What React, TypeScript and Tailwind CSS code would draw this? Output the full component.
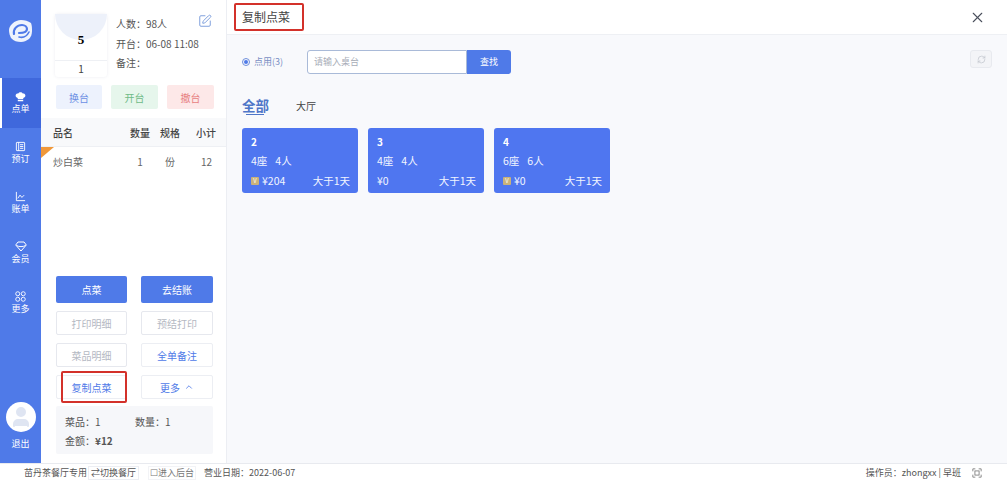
import { X, SquarePen, RefreshCw, ChevronUp, User } from 'lucide-react'

const font = { fontFamily: '"Noto Sans CJK SC", "Noto Sans", sans-serif' }

const tables = [
  { name: '2', seats: '4座', people: '4人', price: '¥204', vip: true },
  { name: '3', seats: '4座', people: '4人', price: '¥0', vip: false },
  { name: '4', seats: '6座', people: '6人', price: '¥0', vip: true },
]

function Logo() {
  return (
    <svg width="24" height="24" viewBox="0 0 24 24">
      <path d="M3 5C6 2 9 1 12 1c4 0 7 1 10 3 1 3 1 5 1 8s-1 6-3 8c-3 2-5 3-8 3-4 0-7-1-10-4-1-2-2-5-2-8 0-2 1-4 3-6z" fill="#eef3fd" />
      <path d="M5 15c-1-5 3-9 8-9 3 0 5 2 5 4 0 3-4 4-8 4" fill="none" stroke="#4f7ae8" strokeWidth="2.2" strokeLinecap="round" />
      <path d="M10 18c4 1 8-1 10-5" fill="none" stroke="#4f7ae8" strokeWidth="1.6" strokeLinecap="round" />
    </svg>
  )
}

function HatIcon() {
  return (
    <svg width="11" height="11" viewBox="0 0 12 12" fill="currentColor">
      <path d="M3 7.500C1.500 7 .5 6 .7 4.500 1 3 2.400 2.500 3.500 2.800 4 1.800 5 1.300 6 1.300s2 .5 2.500 1.500C9.600 2.500 11 3 11.300 4.500 11.500 6 10.500 7 9 7.500V9H3z" />
      <rect x="3" y="9.700" width="6" height="1.500" rx=".4" />
    </svg>
  )
}

function BookIcon() {
  return (
    <svg width="11" height="11" viewBox="0 0 12 12" fill="none" stroke="currentColor" strokeWidth="1">
      <rect x="1.500" y="1.500" width="9" height="9" rx=".6" />
      <path d="M4 1.500v9M5.500 4h3.500M5.500 6h3.500M5.500 8h3.500" />
    </svg>
  )
}

function ChartIcon() {
  return (
    <svg width="11" height="11" viewBox="0 0 12 12" fill="none" stroke="currentColor" strokeWidth="1">
      <path d="M1.500 1v9.500H11" />
      <path d="M3 8l2.500-3.500L7.500 7 10 4.500" />
    </svg>
  )
}

function GemIcon() {
  return (
    <svg width="12" height="11" viewBox="0 0 12 11" fill="none" stroke="currentColor" strokeWidth="1">
      <path d="M3 1h6l2.300 3L6 10 .7 4z" />
      <path d="M1.500 4.500c2.500 1.500 6.500 1.500 9 0" />
    </svg>
  )
}

function GridIcon() {
  return (
    <svg width="11" height="11" viewBox="0 0 12 12" fill="none" stroke="currentColor" strokeWidth="1">
      <circle cx="3" cy="3" r="2.200" />
      <circle cx="9" cy="3" r="2.200" />
      <circle cx="3" cy="9" r="2.200" />
      <circle cx="9" cy="9" r="2.200" />
    </svg>
  )
}

const navItems = [
  { label: '点单', icon: <HatIcon />, active: true },
  { label: '预订', icon: <BookIcon />, active: false },
  { label: '账单', icon: <ChartIcon />, active: false },
  { label: '会员', icon: <GemIcon />, active: false },
  { label: '更多', icon: <GridIcon />, active: false },
]

function Sidebar() {
  return (
    <aside className="flex w-[41px] shrink-0 flex-col bg-[#4f7ae8] text-white">
      <div className="flex h-[78px] items-center justify-center pb-[16px]">
        <Logo />
      </div>
      {navItems.map((item) => (
        <div
          key={item.label}
          className={`flex h-[50px] flex-col items-center justify-center ${item.active ? 'border-l-2 border-white bg-[#3f68dc] pr-[2px]' : ''}`}
        >
          {item.icon}
          <span className="text-[9px] leading-[13px]">{item.label}</span>
        </div>
      ))}
      <div className="mt-auto flex flex-col items-center pb-[13px]">
        <div className="flex size-[30px] items-center justify-center overflow-hidden rounded-full bg-white">
          <User size={24} className="fill-[#dfe5f2] text-[#dfe5f2]" />
        </div>
        <span className="mt-[5px] text-[9px] leading-[13px]">退出</span>
      </div>
    </aside>
  )
}

function ActionButton({ children, tone }: { children: React.ReactNode; tone: 'primary' | 'muted' | 'link' }) {
  const toneClass =
    tone === 'primary'
      ? 'h-[27px] bg-[#4f7ae8] text-white'
      : tone === 'muted'
        ? 'h-[24px] border border-[#e6e8ee] text-[#b4b8c2]'
        : 'h-[24px] border border-[#eceef3] text-[#4f7ae8]'
  return <div className={`flex items-center justify-center gap-1 rounded-[2px] text-[10px] ${toneClass}`}>{children}</div>
}

function OrderPanel() {
  return (
    <section className="flex w-[186px] shrink-0 flex-col border-r border-[#eceef3] bg-white">
      <div className="flex h-[85px] shrink-0 pl-[14px] pr-[14px] pt-[14px]">
        <div className="flex h-[63px] w-[52px] shrink-0 flex-col rounded-[3px] shadow-[0_0_3px_rgba(120,130,160,0.15)]">
          <div className="relative h-[46px]">
            <div className="h-[26px] rounded-b-full bg-[#edf1fa]" />
            <span className="absolute inset-x-0 top-[17px] text-center text-[13px] font-bold leading-[18px] text-black" style={{ fontFamily: '"Liberation Serif", serif' }}>
              5
            </span>
          </div>
          <div className="flex-1 border-t border-[#eef0f4] text-center text-[10px] leading-[16px] text-[#444]">1</div>
        </div>
        <div className="ml-[9px] min-w-0 flex-1 whitespace-nowrap text-[10px] leading-[19.5px] text-[#555]">
          <div>人数：98人</div>
          <div>开台：06-08 11:08</div>
          <div>备注：</div>
        </div>
        <SquarePen size={14} strokeWidth={1.5} className="shrink-0 text-[#6f94d8]" />
      </div>

      <div className="flex gap-[9px] pl-[15px] text-[10px]">
        <div className="flex h-[24px] w-[46px] items-center justify-center rounded-[2px] bg-[#edf2fd] text-[#6c8fe4]">换台</div>
        <div className="flex h-[24px] w-[47px] items-center justify-center rounded-[2px] bg-[#e6f6ec] text-[#6fbb87]">开台</div>
        <div className="flex h-[24px] w-[47px] items-center justify-center rounded-[2px] bg-[#fde8e8] text-[#e77f7f]">撤台</div>
      </div>

      <div className="mt-[9px] flex h-[29px] items-center border-b border-[#eef0f4] bg-[#f8f9fb] pl-[12px] pr-[10px] text-[10px] font-medium text-[#444]">
        <span className="flex-1">品名</span>
        <span className="w-[20px] text-right">数量</span>
        <span className="ml-[10px] w-[20px] text-center">规格</span>
        <span className="ml-[16px] w-[20px] text-right">小计</span>
      </div>
      <div className="relative flex h-[29px] items-center pl-[12px] pr-[14px] text-[10px] text-[#666]">
        <div className="absolute left-0 top-0 h-0 w-0 border-r-[13px] border-t-[11px] border-r-transparent border-t-[#f0983a]" />
        <span className="flex-1">炒白菜</span>
        <span className="w-[20px] text-center">1</span>
        <span className="ml-[10px] w-[20px] text-center">份</span>
        <span className="ml-[19px] w-[13px] text-right">12</span>
      </div>

      <div className="mt-auto grid grid-cols-[71px_72px] gap-x-[14px] gap-y-[8px] pl-[15px]">
        <ActionButton tone="primary">点菜</ActionButton>
        <ActionButton tone="primary">去结账</ActionButton>
        <ActionButton tone="muted">打印明细</ActionButton>
        <ActionButton tone="muted">预结打印</ActionButton>
        <ActionButton tone="muted">菜品明细</ActionButton>
        <ActionButton tone="link">全单备注</ActionButton>
        <div className="relative">
          <ActionButton tone="link">复制点菜</ActionButton>
          <div className="absolute -top-[4px] bottom-[-4px] left-[5px] right-0 rounded-[2px] border-2 border-[#d3312a]" />
        </div>
        <ActionButton tone="link">
          更多 <ChevronUp size={10} />
        </ActionButton>
      </div>
      <div className="mb-[9px] ml-[15px] mr-[13px] mt-[7px] h-[48px] rounded-[2px] bg-[#f6f7fa] pl-[9px] pt-[6px] text-[10px] leading-[19px] text-[#555]">
        <div className="flex">
          <span className="w-[70px]">菜品：1</span>
          <span>数量：1</span>
        </div>
        <div>
          金额：<span className="font-bold">¥12</span>
        </div>
      </div>
    </section>
  )
}

function TableCard({ name, seats, people, price, vip }: (typeof tables)[number]) {
  return (
    <div className="h-[65px] w-[116px] rounded-[3px] bg-[#4f76f0] pl-[9px] pr-[8px] pt-[5px] text-[10.5px] text-[#f2f5ff]">
      <div className="text-[10px] font-bold leading-[18px] text-white">{name}</div>
      <div className="flex gap-[8px] leading-[20px]">
        <span>{seats}</span>
        <span>{people}</span>
      </div>
      <div className="flex items-center justify-between leading-[19px]">
        <span className="flex items-center gap-[3px]">
          {vip && <span className="flex size-[8px] items-center justify-center rounded-[1px] bg-[#c9b27a] text-[6px] leading-none text-white">V</span>}
          {price}
        </span>
        <span>大于1天</span>
      </div>
    </div>
  )
}

function CopyPanel() {
  return (
    <main className="flex min-w-0 flex-1 flex-col bg-[#f8f9fc]">
      <header className="flex h-[35px] shrink-0 items-center justify-between border-b border-[#eef0f4] bg-white pl-[15px] pr-[21px]">
        <h1 className="relative text-[12px] font-normal text-[#444]">
          复制点菜
          <span className="absolute -left-[8px] -top-[5px] h-[28px] w-[70px] rounded-[2px] border-2 border-[#d3312a]" />
        </h1>
        <X size={17} strokeWidth={1.5} className="text-[#4a4f5c]" />
      </header>

      <div className="pl-[15px] pr-[15px] pt-[15px]">
        <div className="flex items-start justify-between">
          <div className="flex h-[24px] items-center">
            <span className="flex size-[8px] items-center justify-center rounded-full border border-[#6f8fdc]">
              <span className="size-[4px] rounded-full bg-[#4f7ae8]" />
            </span>
            <span className="ml-[2px] w-[55px] pl-[2px] text-[9px] text-[#7a8fc4]">点用(3)</span>
            <div className="flex h-[24px] w-[204px]">
              <div className="flex flex-1 items-center rounded-l-[3px] border border-[#a9bad8] bg-white pl-[6px] text-[9px] text-[#a8adb8]">请输入桌台</div>
              <div className="flex w-[44px] items-center justify-center rounded-r-[3px] bg-[#4f7ae8] text-[9px] text-white">查找</div>
            </div>
          </div>
          <div className="flex h-[18px] w-[22px] items-center justify-center rounded-[3px] border border-[#e8eaef] bg-[#f3f4f7]">
            <RefreshCw size={9} className="text-[#c2c5cd]" />
          </div>
        </div>

        <div className="mt-[18px] flex items-center">
          <span className="relative w-[54px] text-[13.5px] font-bold leading-[26px] text-[#4f76c8]">
            全部
            <span className="absolute bottom-[3px] left-[4px] h-px w-[18px] bg-[#4f76c8]" />
          </span>
          <span className="text-[10px] text-[#444]">大厅</span>
        </div>

        <div className="mt-[10px] flex gap-[10px]">
          {tables.map((table) => (
            <TableCard key={table.name} {...table} />
          ))}
        </div>
      </div>
    </main>
  )
}

function Footer() {
  return (
    <footer className="flex h-[18px] shrink-0 items-center justify-between border-t border-[#e8eaef] bg-white pl-[24px] pr-[25px] text-[9px] text-[#555]">
      <div className="flex items-center">
        <span>苗丹茶餐厅专用</span>
        <span className="ml-[1px] flex h-[14px] items-center border border-[#eceef3] px-[2px]">⇄切换餐厅</span>
        <span className="ml-[9px] flex h-[14px] items-center border border-[#f2f3f6] px-[1px] text-[#777]">☐进入后台</span>
        <span className="ml-[8px]">营业日期：2022-06-07</span>
      </div>
      <div className="flex items-center">
        <span>操作员：zhongxx | 早班</span>
        <svg className="ml-[11px]" width="10" height="10" viewBox="0 0 12 12" fill="none" stroke="#777" strokeWidth="1">
          <path d="M1 4V1h3M8 1h3v3M11 8v3H8M4 11H1V8" />
          <rect x="3.500" y="3.500" width="5" height="5" />
        </svg>
      </div>
    </footer>
  )
}

export default function App() {
  return (
    <div className="flex h-[481px] w-[1007px] flex-col overflow-hidden bg-white" style={font}>
      <div className="flex min-h-0 flex-1">
        <Sidebar />
        <OrderPanel />
        <CopyPanel />
      </div>
      <Footer />
    </div>
  )
}
